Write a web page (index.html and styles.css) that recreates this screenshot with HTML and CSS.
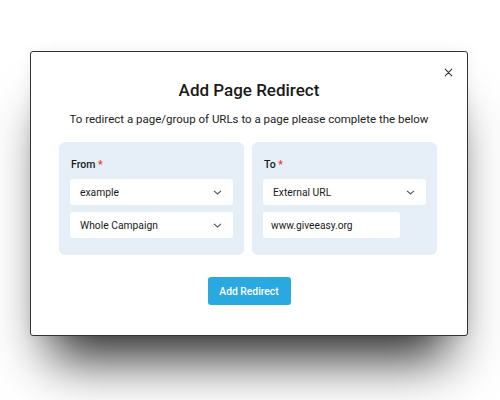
FILE: index.html
```html
<!DOCTYPE html>
<html lang="en">
<head>
  <meta charset="utf-8" />
  <title>Add Page Redirect</title>
  <link rel="stylesheet" href="styles.css">
</head>
<body>
  <div class="modal">
    <button class="close" aria-label="Close">
      <svg width="9" height="9" viewBox="0 0 9 9"><path d="M1.2 1.2L7.8 7.8M7.8 1.2L1.2 7.8" stroke="#333" stroke-width="1.1" stroke-linecap="round"/></svg>
    </button>
    <h1 class="title">Add Page Redirect</h1>
    <p class="subtitle">To redirect a page/group of URLs to a page please complete the below</p>
    <div class="panels">
      <div class="panel">
        <label class="label">From <span class="req">*</span></label>
        <div class="select"><span>example</span><svg class="chev" width="9" height="5" viewBox="0 0 9 5"><path d="M1 0.8L4.5 4L8 0.8" fill="none" stroke="#555" stroke-width="1.1"/></svg></div>
        <div class="select"><span>Whole Campaign</span><svg class="chev" width="9" height="5" viewBox="0 0 9 5"><path d="M1 0.8L4.5 4L8 0.8" fill="none" stroke="#555" stroke-width="1.1"/></svg></div>
      </div>
      <div class="panel">
        <label class="label">To <span class="req">*</span></label>
        <div class="select"><span>External URL</span><svg class="chev" width="9" height="5" viewBox="0 0 9 5"><path d="M1 0.8L4.5 4L8 0.8" fill="none" stroke="#555" stroke-width="1.1"/></svg></div>
        <input class="text-input" type="text" value="www.giveeasy.org" />
      </div>
    </div>
    <div class="actions">
      <button class="primary">Add Redirect</button>
    </div>
  </div>
</body>
</html>
```

FILE: styles.css
```css
* {
  box-sizing: border-box;
  margin: 0;
  padding: 0;
}
html, body {
  height: 100%;
}
body {
  background: #fff;
  font-family: 'Roboto', sans-serif;
  color: #1a1a1a;
  padding: 51px 0 0 30px;
}
.modal {
  position: relative;
  width: 438px;
  height: 285px;
  background: #fff;
  border: 1px solid #333;
  border-radius: 3px;
  box-shadow: 0 42px 50px -20px rgba(0, 0, 0, 0.85), 0 0 14px rgba(0, 0, 0, 0.06);
  padding-top: 27px;
}
.close {
  position: absolute;
  top: 13px;
  right: 12px;
  width: 14px;
  height: 14px;
  border: none;
  background: none;
  display: flex;
  align-items: center;
  justify-content: center;
}
.title {
  text-align: center;
  font-size: 17px;
  font-weight: 500;
  line-height: 22px;
}
.subtitle {
  text-align: center;
  font-size: 11.5px;
  line-height: 16px;
  color: #222;
  margin-top: 10px;
}
.panels {
  display: flex;
  gap: 8px;
  margin: 15px 0 0 28px;
}
.panel {
  width: 185px;
  height: 113px;
  background: #e6eff8;
  border-radius: 6px;
  padding: 16px 11px 0 11px;
  display: flex;
  flex-direction: column;
  gap: 7px;
}
.label {
  font-size: 10.5px;
  font-weight: 500;
  line-height: 14px;
  margin-left: 1px;
}
.req {
  color: #e33;
}
.select {
  height: 26px;
  background: #fff;
  border-radius: 3px;
  display: flex;
  align-items: center;
  justify-content: space-between;
  padding: 0 11px 0 10px;
  font-size: 10.3px;
}
.text-input {
  width: 137px;
  height: 26px;
  border: none;
  border-radius: 3px;
  background: #fff;
  padding: 0 8px;
  font-family: 'Roboto', sans-serif;
  font-size: 10.2px;
  color: #1a1a1a;
  outline: none;
}
.actions {
  display: flex;
  justify-content: center;
  margin-top: 22px;
}
.primary {
  width: 83px;
  height: 28px;
  background: #2aa9e1;
  color: #fff;
  border: none;
  border-radius: 3px;
  font-family: 'Roboto', sans-serif;
  font-size: 10.3px;
  font-weight: 500;
}
```
